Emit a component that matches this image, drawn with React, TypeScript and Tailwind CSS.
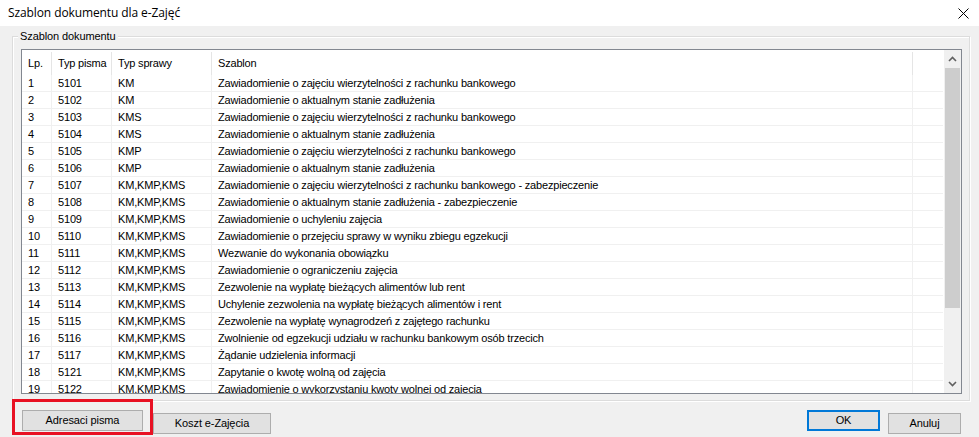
import React from 'react'

const rows: [string, string, string, string][] = [
  ['1', '5101', 'KM', 'Zawiadomienie o zajęciu wierzytelności z rachunku bankowego'],
  ['2', '5102', 'KM', 'Zawiadomienie o aktualnym stanie zadłużenia'],
  ['3', '5103', 'KMS', 'Zawiadomienie o zajęciu wierzytelności z rachunku bankowego'],
  ['4', '5104', 'KMS', 'Zawiadomienie o aktualnym stanie zadłużenia'],
  ['5', '5105', 'KMP', 'Zawiadomienie o zajęciu wierzytelności z rachunku bankowego'],
  ['6', '5106', 'KMP', 'Zawiadomienie o aktualnym stanie zadłużenia'],
  ['7', '5107', 'KM,KMP,KMS', 'Zawiadomienie o zajęciu wierzytelności z rachunku bankowego - zabezpieczenie'],
  ['8', '5108', 'KM,KMP,KMS', 'Zawiadomienie o aktualnym stanie zadłużenia - zabezpieczenie'],
  ['9', '5109', 'KM,KMP,KMS', 'Zawiadomienie o uchyleniu zajęcia'],
  ['10', '5110', 'KM,KMP,KMS', 'Zawiadomienie o przejęciu sprawy w wyniku zbiegu egzekucji'],
  ['11', '5111', 'KM,KMP,KMS', 'Wezwanie do wykonania obowiązku'],
  ['12', '5112', 'KM,KMP,KMS', 'Zawiadomienie o ograniczeniu zajęcia'],
  ['13', '5113', 'KM,KMP,KMS', 'Zezwolenie na wypłatę bieżących alimentów lub rent'],
  ['14', '5114', 'KM,KMP,KMS', 'Uchylenie zezwolenia na wypłatę bieżących alimentów i rent'],
  ['15', '5115', 'KM,KMP,KMS', 'Zezwolenie na wypłatę wynagrodzeń z zajętego rachunku'],
  ['16', '5116', 'KM,KMP,KMS', 'Zwolnienie od egzekucji udziału w rachunku bankowym osób trzecich'],
  ['17', '5117', 'KM,KMP,KMS', 'Żądanie udzielenia informacji'],
  ['18', '5121', 'KM,KMP,KMS', 'Zapytanie o kwotę wolną od zajęcia'],
  ['19', '5122', 'KM,KMP,KMS', 'Zawiadomienie o wykorzystaniu kwoty wolnej od zajęcia'],
]

const cols = 'grid grid-cols-[30px_60px_100px_701px_30px]'

const Chevron = ({ up }: { up?: boolean }) => (
  <svg width="9" height="6" viewBox="0 0 9 6" className="block">
    <path d={up ? 'M1 5 L4.5 1.5 L8 5' : 'M1 1 L4.5 4.5 L8 1'} stroke="#606060" strokeWidth="1.6" fill="none" />
  </svg>
)

const Btn = ({ label, w, primary }: { label: string; w: string; primary?: boolean }) => (
  <button
    className={`${w} h-[21px] bg-[#e1e1e1] text-[11px] tracking-[-0.1px] text-black ${
      primary ? 'border-2 border-[#0078d7]' : 'border border-[#adadad]'
    }`}
  >
    {label}
  </button>
)

export default function App() {
  return (
    <div className="relative w-[979px] h-[437px] bg-[#f0f0f0] overflow-hidden font-['Liberation_Sans',Arial,sans-serif] text-black">
      {/* title bar */}
      <div className="h-[26px] bg-white flex items-center justify-between pl-[8px] pr-[10px]">
        <span className="text-[12px] font-['Open_Sans',sans-serif] tracking-[-0.1px]">Szablon dokumentu dla e-Zajęć</span>
        <svg width="11" height="11" viewBox="0 0 11 11">
          <path d="M0.5 0.5 L10.5 10.5 M10.5 0.5 L0.5 10.5" stroke="#000" strokeWidth="1" />
        </svg>
      </div>

      {/* group box */}
      <div className="relative mt-[10px] ml-[12px] w-[958px] h-[365px] border border-[#dcdcdc] shadow-[inset_1px_1px_0_#fff,1px_1px_0_#fff] pt-[12px] pl-[8px]">
        <span className="absolute -top-[8px] left-[5px] bg-[#f0f0f0] px-[2px] text-[11px] leading-[14px] tracking-[-0.1px]">Szablon dokumentu</span>

        {/* list view */}
        <div className="w-[941px] h-[345px] border border-[#828790] bg-white flex overflow-hidden">
          <div className="w-[922px] text-[11px] tracking-[-0.18px]">
            <div className={`${cols} h-[25px] items-center`}>
              {['Lp.', 'Typ pisma', 'Typ sprawy', 'Szablon', ''].map((h, i) => (
                <div key={i} className={`h-[23px] mt-[2px] flex items-center pl-[6px] ${i < 4 ? 'border-r border-[#e5e5e5]' : ''}`}>
                  {h}
                </div>
              ))}
            </div>
            {rows.map(r => (
              <div key={r[0]} className={`${cols} h-[17px]`}>
                {[...r, ''].map((c, i) => (
                  <div
                    key={i}
                    className={`pl-[6px] leading-[16px] whitespace-nowrap border-b border-[#f0f0f0] ${i < 4 ? 'border-r' : ''}`}
                  >
                    {c}
                  </div>
                ))}
              </div>
            ))}
          </div>

          {/* scrollbar */}
          <div className="w-[17px] h-full bg-[#f0f0f0] flex flex-col">
            <div className="h-[18px] flex items-center justify-center">
              <Chevron up />
            </div>
            <div className="h-[240px] mx-[1px] bg-[#cdcdcd]" />
            <div className="flex-1" />
            <div className="h-[18px] flex items-center justify-center">
              <Chevron />
            </div>
          </div>
        </div>
      </div>

      {/* buttons */}
      <div className="flex items-start mt-[9px] pl-[22px] pr-[18px]">
        <Btn label="Adresaci pisma" w="w-[121px]" />
        <div className="ml-[10px]"><Btn label="Koszt e-Zajęcia" w="w-[118px]" /></div>
        <div className="flex-1" />
        <Btn label="OK" w="w-[73px]" primary />
        <div className="ml-[8px]"><Btn label="Anuluj" w="w-[73px]" /></div>
      </div>

      {/* red highlight annotation */}
      <div className="absolute left-[12px] top-[399px] w-[141px] h-[36px] border-[3px] border-[#e81123] pointer-events-none" />
    </div>
  )
}
